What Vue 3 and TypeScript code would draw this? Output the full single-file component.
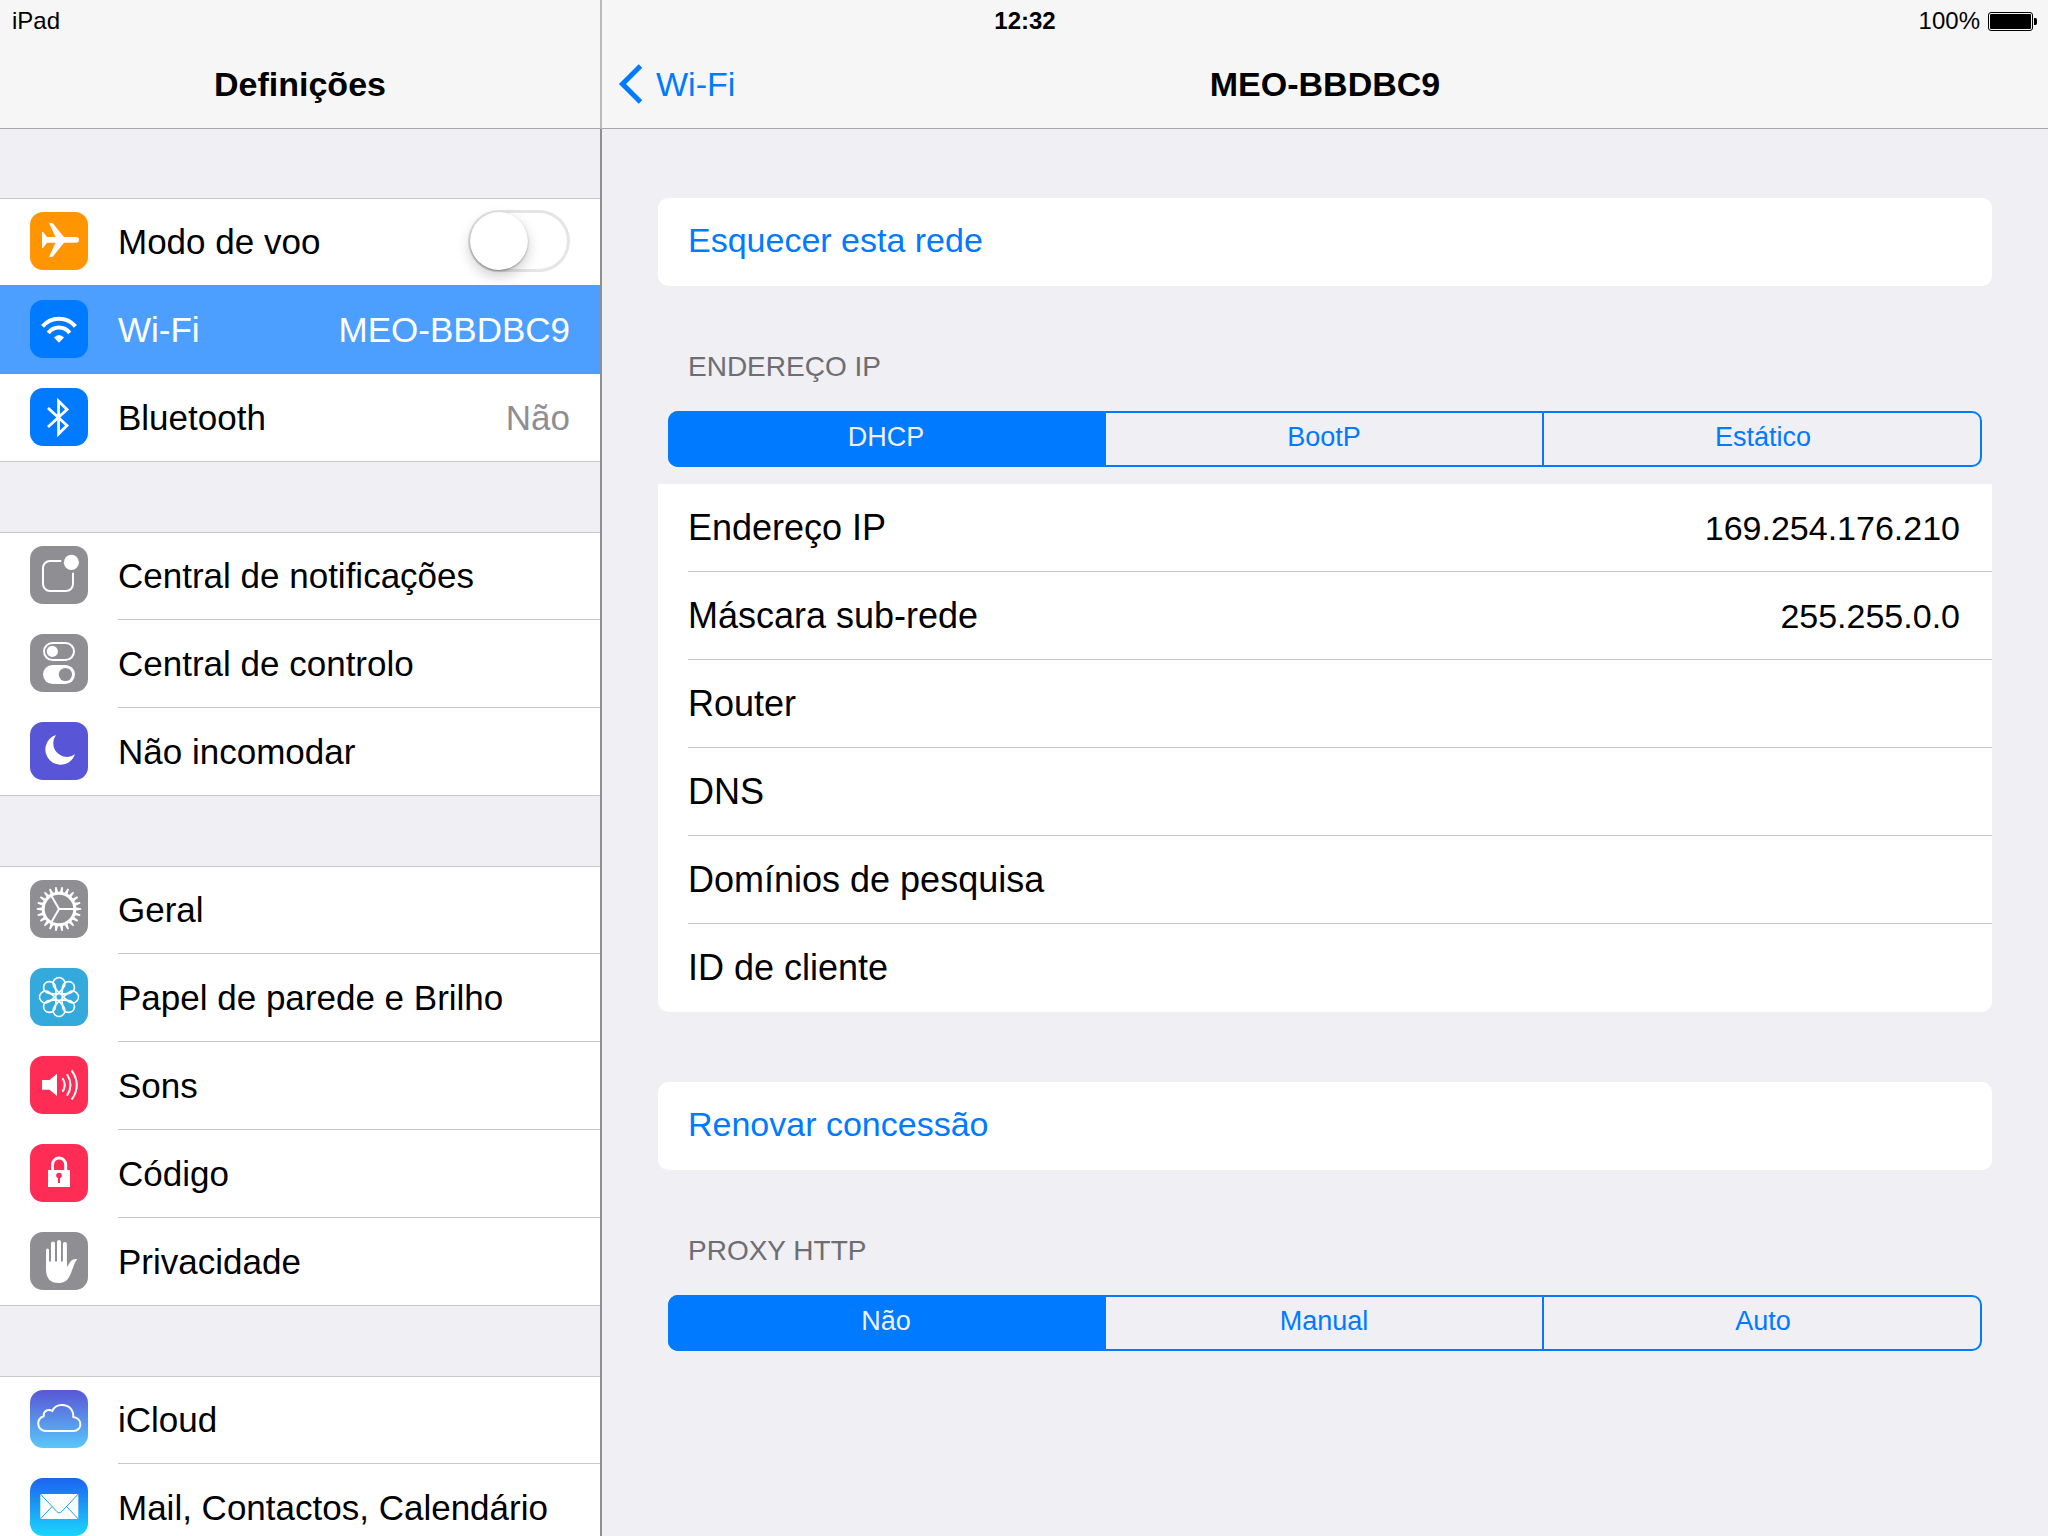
<script setup lang="ts">
import { ref } from 'vue'

interface SettingsRow {
  id: string
  label: string
  tint: string
  value?: string
  toggle?: boolean
}

const groups: SettingsRow[][] = [
  [
    { id: 'airplane', label: 'Modo de voo', tint: 'orange', toggle: true },
    { id: 'wifi', label: 'Wi-Fi', tint: 'blue', value: 'MEO-BBDBC9' },
    { id: 'bluetooth', label: 'Bluetooth', tint: 'blue', value: 'Não' },
  ],
  [
    { id: 'notifications', label: 'Central de notificações', tint: 'gray' },
    { id: 'control', label: 'Central de controlo', tint: 'gray' },
    { id: 'moon', label: 'Não incomodar', tint: 'purple' },
  ],
  [
    { id: 'general', label: 'Geral', tint: 'gray' },
    { id: 'wallpaper', label: 'Papel de parede e Brilho', tint: 'cyan' },
    { id: 'sounds', label: 'Sons', tint: 'red' },
    { id: 'passcode', label: 'Código', tint: 'red' },
    { id: 'privacy', label: 'Privacidade', tint: 'gray' },
  ],
  [
    { id: 'icloud', label: 'iCloud', tint: 'cloud' },
    { id: 'mail', label: 'Mail, Contactos, Calendário', tint: 'mail' },
  ],
]

const selected = ref('wifi')
const airplaneMode = ref(false)

const ipModes = ['DHCP', 'BootP', 'Estático']
const ipMode = ref('DHCP')
const proxyModes = ['Não', 'Manual', 'Auto']
const proxyMode = ref('Não')

const fields = [
  { label: 'Endereço IP', value: '169.254.176.210' },
  { label: 'Máscara sub-rede', value: '255.255.0.0' },
  { label: 'Router', value: '' },
  { label: 'DNS', value: '' },
  { label: 'Domínios de pesquisa', value: '' },
  { label: 'ID de cliente', value: '' },
]

const teeth = Array.from({ length: 22 }, (_, i) => (i * 360) / 22)
const spokes = [0, 120, 240]
const petals = Array.from({ length: 8 }, (_, i) => i * 45)
</script>

<template>
  <div class="screen">
    <div class="status">
      <span>iPad</span>
      <time class="clock">12:32</time>
      <span class="power">
        100%
        <svg class="battery" viewBox="0 0 50 19" aria-hidden="true">
          <rect x="0.5" y="0.5" width="44" height="18" rx="2.5" fill="none" stroke="#000" />
          <rect x="2" y="2" width="41" height="15" rx="1" />
          <path d="M46 6h1.5q1.5 0 1.5 2v3q0 2-1.5 2H46z" />
        </svg>
      </span>
    </div>

    <aside class="sidebar">
      <header class="bar"><h1>Definições</h1></header>
      <nav class="list">
        <div v-for="(group, g) in groups" :key="g" class="group">
          <component
            :is="row.toggle ? 'label' : 'a'"
            v-for="row in group"
            :key="row.id"
            class="row"
            :class="{ selected: selected === row.id }"
            :href="row.toggle ? undefined : '#' + row.id"
            @click="row.toggle || (selected = row.id)"
          >
            <svg class="icon" :class="row.tint" viewBox="0 0 58 58" aria-hidden="true">
              <path
                v-if="row.id === 'airplane'"
                fill="#fff"
                d="M13 20H12V36H13L17 30.7H25.5L19 45H22.5L34 30.7H46C48 30.7 49 29.5 49 27.9S48 25 46 25H34L22.5 11H19L25.5 25H17Z"
              />
              <g v-else-if="row.id === 'wifi'" fill="none" stroke="#fff" stroke-width="4">
                <path d="M12.6 26.4A21.3 21.3 0 0 1 45.4 26.4" />
                <path d="M18.3 33A13.3 13.3 0 0 1 39.7 33" />
                <path d="M24 37.5Q29 32.4 34 37.5L29 42.8Z" fill="#fff" stroke="none" />
              </g>
              <path
                v-else-if="row.id === 'bluetooth'"
                fill="none"
                stroke="#fff"
                stroke-width="2.8"
                d="M18 20L37 37.5L28.6 45.8V13.2L37 21.5L18 39"
              />
              <g v-else-if="row.id === 'notifications'" fill="none" stroke="#fff" stroke-width="2">
                <path d="M31.3 15H20a7 7 0 0 0-7 7V38a7 7 0 0 0 7 7H36a7 7 0 0 0 7-7V26.7" />
                <circle cx="41.4" cy="16.4" r="7.6" fill="#fff" stroke="none" />
              </g>
              <g v-else-if="row.id === 'control'">
                <rect x="14" y="9" width="30" height="17" rx="8.5" fill="none" stroke="#fff" stroke-width="2" />
                <circle cx="22.3" cy="17.4" r="5.6" fill="#fff" />
                <rect x="13" y="31" width="32" height="19" rx="9.5" fill="#fff" />
                <circle cx="35.4" cy="40.5" r="6.6" fill="#8e8e93" />
              </g>
              <path
                v-else-if="row.id === 'moon'"
                fill="#fff"
                d="M26 13A15.2 15.2 0 1 0 45 32.3A13.7 13.7 0 0 1 26 13Z"
              />
              <g v-else-if="row.id === 'general'" fill="none" stroke="#fff" stroke-width="2">
                <circle cx="29" cy="29" r="15.8" stroke-width="3" />
                <path
                  v-for="angle in teeth"
                  :key="angle"
                  d="M45 27.3L51.2 28.2V29.8L45 30.7Z"
                  fill="#fff"
                  stroke="none"
                  :transform="`rotate(${angle} 29 29)`"
                />
                <path
                  v-for="angle in spokes"
                  :key="'s' + angle"
                  d="M29 29H44"
                  :transform="`rotate(${angle} 29 29)`"
                />
              </g>
              <g v-else-if="row.id === 'wallpaper'" fill="none" stroke="#fff" stroke-width="1.7">
                <circle cx="29" cy="29" r="3.4" />
                <path
                  v-for="angle in petals"
                  :key="angle"
                  d="M29 25L24.4 19.2A5.9 5.9 0 1 1 33.6 19.2Z"
                  :transform="`rotate(${angle} 29 29)`"
                />
              </g>
              <g v-else-if="row.id === 'sounds'" fill="none" stroke="#fff" stroke-width="2">
                <path d="M12 24H19.5L27 17.8V40L19.5 33.8H12Z" fill="#fff" stroke="none" />
                <path d="M32.5 22.3Q37 29 32.5 35.7" />
                <path d="M37 18.3Q44 29 37 39.7" />
                <path d="M41.6 14.3Q52 29 41.6 43.7" />
              </g>
              <g v-else-if="row.id === 'passcode'">
                <path d="M22.5 27V20.7a6.6 6.6 0 0 1 13.2 0V27" fill="none" stroke="#fff" stroke-width="3" />
                <rect x="18" y="26" width="22" height="17" fill="#fff" />
                <circle cx="29" cy="31.5" r="2.8" fill="#ff2d55" />
                <path d="M29 31V39" stroke="#ff2d55" stroke-width="2" />
              </g>
              <g v-else-if="row.id === 'privacy'">
                <path
                  fill="#fff"
                  d="M16 29.5H37V34.8C38.6 33 39.2 31 41 29C43 27 45.5 26.5 47.2 27.4C45 29.5 44 33 42.5 37C40 44 38 51 28.5 51C20 51 16 46 16 37Z"
                />
                <g fill="none" stroke="#fff" stroke-linecap="round">
                  <path d="M17.5 18V32" stroke-width="3" />
                  <path d="M23 11.5V32M29 10V32M34.9 12V32" stroke-width="4" />
                </g>
              </g>
              <path
                v-else-if="row.id === 'icloud'"
                fill="none"
                stroke="#fff"
                stroke-width="2"
                d="M16 41C11 41 8.2 37.5 8.2 33.6C8.2 30 10.2 27.5 13.6 26.3C13.4 21 18 18.4 22.3 21C24 17 27.5 14.9 32 14.9C39 14.9 43.7 20 43.3 27C47.5 27.6 50.4 30.5 50.4 34.2C50.4 38 47.5 41 43.5 41Z"
              />
              <g v-else>
                <rect x="10.3" y="16" width="38" height="25" fill="#fff" />
                <path
                  d="M10.3 16L26.6 33.3Q29.3 36.4 32 33.3L48.3 16M10.3 41L22 28.6M48.3 41L36.6 28.6"
                  fill="none"
                  stroke="#1c9bf6"
                />
              </g>
            </svg>
            <span class="body">
              <span class="label">{{ row.label }}</span>
              <input v-if="row.toggle" v-model="airplaneMode" type="checkbox" role="switch" class="switch" />
              <span v-else-if="row.value" class="value">{{ row.value }}</span>
            </span>
          </component>
        </div>
      </nav>
    </aside>

    <main class="detail">
      <header class="bar detail-bar">
        <a class="back" href="#wifi">
          <svg class="chevron" viewBox="0 0 24 40" aria-hidden="true">
            <path d="M22.5 2L4.5 20L22.5 38" fill="none" stroke="#007aff" stroke-width="5" />
          </svg>
          Wi-Fi
        </a>
        <h2>MEO-BBDBC9</h2>
      </header>

      <div class="content">
        <button type="button" class="action">Esquecer esta rede</button>

        <fieldset class="choice">
          <legend>ENDEREÇO IP</legend>
          <div class="segments">
            <label v-for="mode in ipModes" :key="mode" class="segment">
              <input v-model="ipMode" type="radio" name="ip-mode" :value="mode" />
              <span>{{ mode }}</span>
            </label>
          </div>
        </fieldset>

        <div class="card">
          <table>
            <tbody>
              <tr v-for="field in fields" :key="field.label">
                <th scope="row">{{ field.label }}</th>
                <td>{{ field.value }}</td>
              </tr>
            </tbody>
          </table>
        </div>

        <button type="button" class="action">Renovar concessão</button>

        <fieldset class="choice">
          <legend>PROXY HTTP</legend>
          <div class="segments">
            <label v-for="mode in proxyModes" :key="mode" class="segment">
              <input v-model="proxyMode" type="radio" name="proxy-mode" :value="mode" />
              <span>{{ mode }}</span>
            </label>
          </div>
        </fieldset>
      </div>
    </main>
  </div>
</template>

<style>
body {
  margin: 0;
  background: #efeff4;
}
</style>

<style scoped>
.screen {
  position: relative;
  display: flex;
  height: 100vh;
  overflow: hidden;
  background: #efeff4;
  color: #000;
  font-family: "Liberation Sans", Arial, Helvetica, sans-serif;
}

.screen * {
  box-sizing: border-box;
}

/* Status bar, laid over both panes */
.status {
  position: absolute;
  top: 0;
  left: 0;
  right: 0;
  display: grid;
  grid-template-columns: 1fr auto 1fr;
  align-items: center;
  height: 42px;
  padding: 0 10px 0 12px;
  font-size: 24px;
}

.clock {
  font-weight: bold;
}

.power {
  display: flex;
  align-items: center;
  justify-content: flex-end;
  gap: 8px;
}

.battery {
  width: 50px;
  height: 19px;
}

/* Panes */
.sidebar {
  display: flex;
  flex-direction: column;
  flex: 0 0 602px;
}

.detail {
  display: flex;
  flex-direction: column;
  flex: 1;
  min-width: 0;
}

.bar {
  display: flex;
  align-items: center;
  justify-content: center;
  flex: none;
  height: 129px;
  padding-top: 40px;
  border-bottom: 1px solid #a7a7ac;
  background: #f6f6f6;
}

.sidebar .bar {
  border-right: 2px solid #b9b9bd;
}

.bar h1,
.bar h2 {
  margin: 0;
  font-size: 34px;
  font-weight: bold;
}

.detail-bar {
  display: grid;
  grid-template-columns: 1fr auto 1fr;
  padding-left: 16px;
  padding-right: 16px;
}

.back {
  display: flex;
  align-items: center;
  gap: 14px;
  color: #007aff;
  font-size: 34px;
  text-decoration: none;
}

.chevron {
  width: 24px;
  height: 40px;
}

/* Settings list */
.list {
  display: flex;
  flex-direction: column;
  flex: 1;
  gap: 70px;
  min-height: 0;
  padding: 69px 0;
  overflow-y: auto;
  scrollbar-width: none;
  border-right: 2px solid #8e8e93;
}

.group {
  flex: none;
  background: #fff;
  box-shadow: inset 0 1px #c8c7cc, inset 0 -1px #c8c7cc;
}

.row {
  display: flex;
  align-items: center;
  height: 88px;
  padding-left: 30px;
  color: #000;
  font-size: 35px;
  text-decoration: none;
}

.body {
  display: flex;
  align-items: center;
  justify-content: space-between;
  flex: 1;
  height: 88px;
  padding-right: 30px;
  box-shadow: inset 0 -1px #c8c7cc;
  white-space: nowrap;
}

.row:last-child .body {
  box-shadow: none;
}

.value {
  color: #8e8e93;
}

/* Covers the separator of the row above */
.row.selected {
  position: relative;
  height: 89px;
  margin-top: -1px;
  padding-top: 1px;
  background: #4c9fff;
}

.selected .body {
  box-shadow: none;
}

.selected .label,
.selected .value {
  color: #fff;
}

.icon {
  flex: none;
  width: 58px;
  height: 58px;
  margin: 0 30px 2px 0;
  border-radius: 13px;
}

.orange { background: #ff9500; }
.blue { background: #007aff; }
.gray { background: #8e8e93; }
.purple { background: #5856d6; }
.cyan { background: #34aadc; }
.red { background: #ff2d55; }
.cloud { background: linear-gradient(#5856d6, #5ac8fa); }
.mail { background: linear-gradient(#1d62f0, #1ad6fd); }

.switch {
  appearance: none;
  width: 102px;
  height: 62px;
  margin: 0 0 2px;
  padding: 2px;
  border-radius: 31px;
  background: #fff;
  box-shadow: inset 0 0 0 3px #e5e5e5;
}

.switch::before {
  content: "";
  display: block;
  width: 58px;
  height: 58px;
  border-radius: 50%;
  background: #fff;
  box-shadow: 0 1px 2px rgba(0, 0, 0, 0.35), 0 6px 14px rgba(0, 0, 0, 0.2);
}

.switch:checked {
  background: #4cd964;
  box-shadow: none;
}

.switch:checked::before {
  margin-left: 40px;
}

/* Network detail */
.content {
  display: flex;
  flex-direction: column;
  flex: 1;
  min-height: 0;
  padding: 69px 56px;
  overflow-y: auto;
  scrollbar-width: none;
}

.action {
  flex: none;
  height: 88px;
  padding: 0 30px 4px;
  border: 0;
  border-radius: 10px;
  background: #fff;
  color: #007aff;
  font: inherit;
  font-size: 34px;
  text-align: left;
}

.choice {
  flex: none;
  margin: 0;
  padding: 0 10px;
  border: 0;
}

.choice legend {
  padding: 65px 20px 28px;
  color: #6d6d72;
  font-size: 28px;
  line-height: 32px;
}

.segments {
  display: grid;
  grid-template-columns: repeat(3, 1fr);
  height: 56px;
  overflow: hidden;
  border-radius: 10px;
  box-shadow: inset 0 0 0 2px #007aff;
}

.segment {
  position: relative;
  color: #007aff;
  font-size: 27px;
}

.segment:not(:last-child) {
  border-right: 2px solid #007aff;
}

.segment input {
  position: absolute;
  inset: 0;
  margin: 0;
  opacity: 0;
}

.segment span {
  display: flex;
  align-items: center;
  justify-content: center;
  height: 56px;
  padding-bottom: 4px;
}

.segment input:checked + span {
  background: #007aff;
  color: #efeff4;
}

.card {
  flex: none;
  margin: 17px 0 70px;
  padding-left: 30px;
  border-radius: 0 0 10px 10px;
  background: #fff;
}

.card table {
  width: 100%;
  border-spacing: 0;
}

.card th,
.card td {
  height: 88px;
  padding: 0;
  box-shadow: inset 0 -1px #c8c7cc;
}

.card tr:last-child > * {
  box-shadow: none;
}

.card th {
  font-size: 36px;
  font-weight: normal;
  text-align: left;
}

.card td {
  padding-right: 32px;
  font-size: 34px;
  text-align: right;
}
</style>
